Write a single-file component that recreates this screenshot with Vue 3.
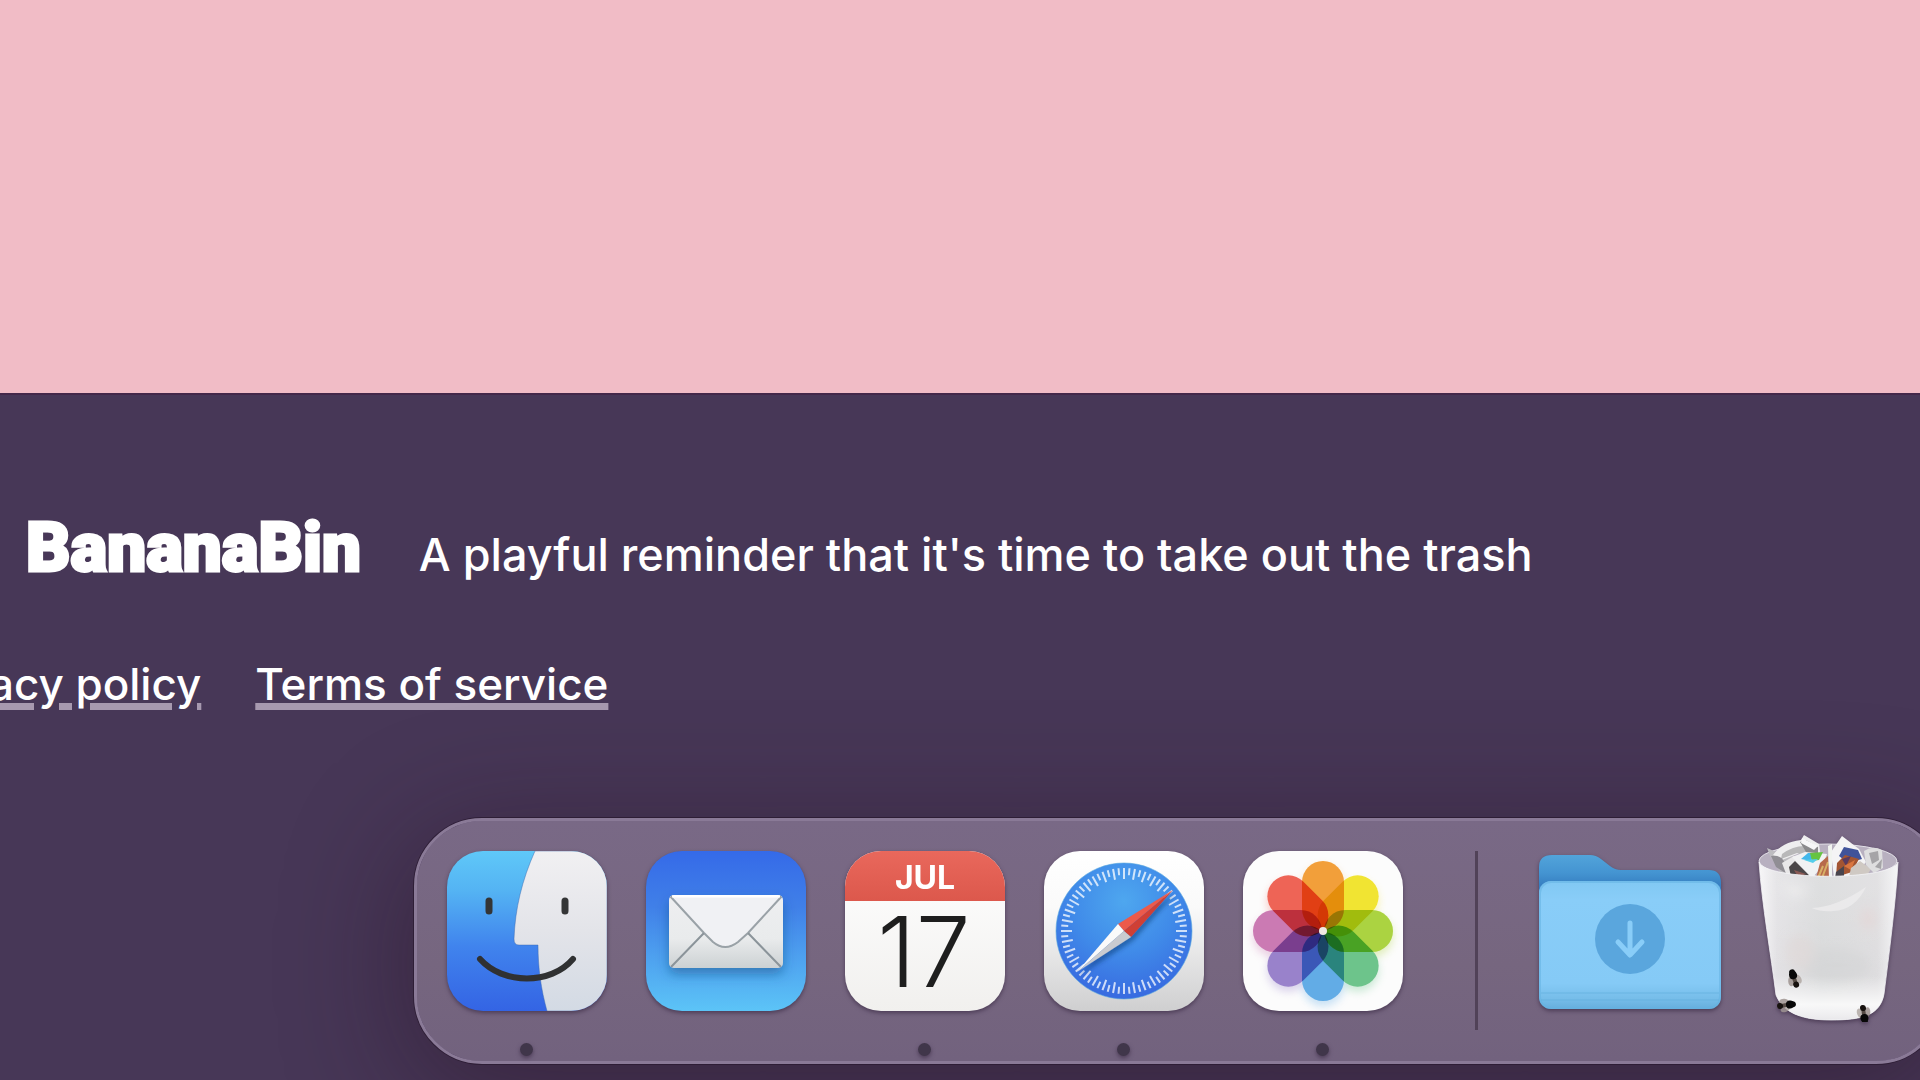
<script setup>
const petals = [
  { angle: 0, color: '#f29f3a' },
  { angle: 45, color: '#f1e432' },
  { angle: 90, color: '#abd341' },
  { angle: 135, color: '#6dc48b' },
  { angle: 180, color: '#62ace6' },
  { angle: 225, color: '#9982cb' },
  { angle: 270, color: '#cb7ab3' },
  { angle: 315, color: '#ee6456' },
]
const ticks = Array.from({ length: 72 }, (_, i) => ({ angle: i * 5, inner: i % 2 ? 24 : 28 }))
const flies = [
  'translate(36 143) rotate(-18)',
  'translate(29 170) rotate(82)',
  'translate(106 180) rotate(172)',
]
</script>

<template>
  <div class="page">
    <main class="hero"></main>

    <footer class="footer">
      <div class="intro">
        <strong class="brand">BananaBin</strong>
        <p class="tagline">A playful reminder that it's time to take out the trash</p>
      </div>
      <nav class="links" aria-label="Legal">
        <a href="#privacy">Privacy policy</a>
        <a href="#terms">Terms of service</a>
      </nav>
    </footer>

    <div class="dock" role="toolbar" aria-label="Dock">
      <button class="app running" type="button" aria-label="Finder">
        <svg viewBox="0 0 160 160" width="160" height="160">
          <defs>
            <linearGradient id="finderBlue" x2="0" y2="1"><stop stop-color="#5fc8f8" /><stop offset=".25" stop-color="#54b3f3" /><stop offset=".6" stop-color="#4083ed" /><stop offset="1" stop-color="#3464e4" /></linearGradient>
            <linearGradient id="finderWhite" x2="0" y2="1"><stop stop-color="#f1f0f2" /><stop offset=".5" stop-color="#e3e4e9" /><stop offset="1" stop-color="#d3dae4" /></linearGradient>
            <clipPath id="tile"><rect width="160" height="160" rx="36" /></clipPath>
          </defs>
          <g clip-path="url(#tile)">
            <rect width="160" height="160" fill="url(#finderBlue)" />
            <path d="M88 0C75 29 68 58 67 88Q67 94 72 94H91C91 117 94 138 100 160H160V0Z" fill="url(#finderWhite)" stroke="#3c68ad" stroke-opacity=".45" />
            <path d="M42 50V60M118 50V60" stroke="#343536" stroke-width="7" stroke-linecap="round" />
            <path d="M33 108C56 134 104 134 126 108" fill="none" stroke="#303132" stroke-width="6" stroke-linecap="round" />
          </g>
        </svg>
      </button>

      <button class="app" type="button" aria-label="Mail">
        <svg viewBox="0 0 160 160" width="160" height="160">
          <defs>
            <linearGradient id="mailBlue" x2="0" y2="1"><stop stop-color="#356ae8" /><stop offset=".35" stop-color="#4080e8" /><stop offset="1" stop-color="#5cc4f7" /></linearGradient>
            <linearGradient id="envelope" x2="0" y2="1"><stop stop-color="#eeeff1" /><stop offset=".6" stop-color="#e9ebec" /><stop offset="1" stop-color="#ccd1d3" /></linearGradient>
            <filter id="mailShadow" x="-20%" y="-20%" width="140%" height="160%"><feDropShadow dx="0" dy="6" stdDeviation="6" flood-color="#164a80" flood-opacity=".5" /></filter>
            <clipPath id="envelopeClip"><rect x="23" y="44" width="114" height="73" rx="5" /></clipPath>
          </defs>
          <rect width="160" height="160" rx="36" fill="url(#mailBlue)" />
          <rect x="23" y="44" width="114" height="73" rx="5" fill="url(#envelope)" filter="url(#mailShadow)" />
          <g clip-path="url(#envelopeClip)" fill="none" stroke="#8b949a" stroke-width="2">
            <path d="M58 82 25 116M102 82 135 116" />
            <path d="M24 45 58 82 67 91Q79 101 92 91L102 82 136 45Z" fill="#f0f1f4" stroke-opacity=".85" />
            <path d="M26 45H134" stroke="#fff" stroke-width="3" />
          </g>
        </svg>
      </button>

      <button class="app running" type="button" aria-label="Calendar">
        <svg viewBox="0 0 160 160" width="160" height="160">
          <defs>
            <linearGradient id="calendarRed" x2="0" y2="1"><stop stop-color="#e9685c" /><stop offset="1" stop-color="#dc584c" /></linearGradient>
            <linearGradient id="calendarPage" x2="0" y2="1"><stop stop-color="#fff" /><stop offset="1" stop-color="#f1f0ee" /></linearGradient>
          </defs>
          <g clip-path="url(#tile)">
            <rect width="160" height="160" fill="url(#calendarPage)" />
            <rect width="160" height="50" fill="url(#calendarRed)" />
          </g>
          <text class="month" x="80" y="38">JUL</text>
          <text class="day" x="79" y="136">17</text>
        </svg>
      </button>

      <button class="app running" type="button" aria-label="Safari">
        <svg viewBox="0 0 160 160" width="160" height="160">
          <defs>
            <linearGradient id="safariTile" x2="0" y2="1"><stop stop-color="#fff" /><stop offset=".35" stop-color="#fafafa" /><stop offset="1" stop-color="#cfcfd0" /></linearGradient>
            <radialGradient id="safariBlue" cx=".5" cy=".28" r=".75"><stop stop-color="#4ea7ef" /><stop offset=".5" stop-color="#408be9" /><stop offset="1" stop-color="#3767df" /></radialGradient>
            <filter id="needleShadow"><feDropShadow dx="2" dy="4" stdDeviation="2" flood-color="#0b2a66" flood-opacity=".45" /></filter>
          </defs>
          <rect width="160" height="160" rx="36" fill="url(#safariTile)" />
          <circle cx="80" cy="80" r="68" fill="url(#safariBlue)" stroke="#58a9de" stroke-opacity=".6" />
          <line v-for="t in ticks" :key="t.angle" x1="80" x2="80" y1="17" :y2="t.inner" :transform="`rotate(${t.angle} 80 80)`" stroke="#fff" stroke-opacity=".75" stroke-width="2" />
          <g filter="url(#needleShadow)">
            <path d="M129 39 74 73 80 80Z" fill="#ec5a4c" />
            <path d="M129 39 80 80 87 86Z" fill="#cf3f34" />
            <path d="M33 121 74 73 80 80Z" fill="#fafafa" />
            <path d="M33 121 80 80 87 86Z" fill="#c9cbd0" />
          </g>
        </svg>
      </button>

      <button class="app running" type="button" aria-label="Photos">
        <svg viewBox="0 0 160 160" width="160" height="160">
          <defs><filter id="petalBlur" x="-20%" y="-20%" width="140%" height="140%"><feGaussianBlur stdDeviation="4" /></filter></defs>
          <rect width="160" height="160" rx="36" fill="#fcfcfc" />
          <g filter="url(#petalBlur)" opacity=".35" transform="translate(0 5)">
            <rect v-for="p in petals" :key="p.angle" x="59" y="10" width="42" height="70" rx="21" :fill="p.color" :transform="`rotate(${p.angle} 80 80)`" />
          </g>
          <g class="petals">
            <rect v-for="p in petals" :key="p.angle" x="59" y="10" width="42" height="69" rx="21" :fill="p.color" :transform="`rotate(${p.angle} 80 80)`" />
          </g>
          <circle cx="80" cy="80" r="4" fill="#f0e9e2" />
        </svg>
      </button>

      <div class="divider" role="separator"></div>

      <button class="app folder" type="button" aria-label="Downloads">
        <svg viewBox="0 0 182 155" width="182" height="155">
          <defs>
            <linearGradient id="folderBack" x2="0" y2="1"><stop stop-color="#52a4da" /><stop offset=".3" stop-color="#4494d1" /><stop offset=".5" stop-color="#3780c2" /></linearGradient>
            <linearGradient id="folderFront" x2="0" y2="1"><stop stop-color="#81c8f3" /><stop offset=".15" stop-color="#89cdf8" /><stop offset=".8" stop-color="#85caf6" /><stop offset=".92" stop-color="#76bde9" /><stop offset="1" stop-color="#66aedc" /></linearGradient>
          </defs>
          <path d="M0 40V12Q0 0 13 0H51Q57 0 62 4L71 11Q76 15 82 15H170Q182 15 182 28V60H0Z" fill="url(#folderBack)" />
          <rect y="26" width="182" height="128" rx="12" fill="url(#folderFront)" />
          <rect x="1" y="27" width="180" height="126" rx="11" fill="none" stroke="#64b3e2" stroke-opacity=".55" stroke-width="2" />
          <path d="M2 138H180M2 145H180" stroke="#62aedc" stroke-opacity=".35" stroke-width="2" />
          <circle cx="91" cy="84" r="35" fill="#5aa6dd" />
          <path d="M91 68V99M79 87 91 100 103 87" fill="none" stroke="#89cdf8" stroke-width="5" stroke-linecap="round" stroke-linejoin="round" />
        </svg>
      </button>

      <button class="app trash" type="button" aria-label="Trash">
        <svg viewBox="0 0 141 187" width="141" height="187">
          <defs>
            <linearGradient id="binSide"><stop stop-color="#f6f5f7" /><stop offset=".13" stop-color="#e2e1e4" /><stop offset=".45" stop-color="#d9dadb" /><stop offset=".85" stop-color="#dedddf" /><stop offset="1" stop-color="#f4f4f6" /></linearGradient>
            <linearGradient id="binGlow" x2="0" y2="1"><stop stop-color="#fff" stop-opacity=".15" /><stop offset=".72" stop-color="#fff" stop-opacity="0" /><stop offset=".9" stop-color="#fff" stop-opacity=".8" /><stop offset="1" stop-color="#e9e8eb" /></linearGradient>
            <filter id="soft" x="-50%" y="-50%" width="200%" height="200%"><feGaussianBlur stdDeviation="6" /></filter>
            <filter id="paperSoft"><feGaussianBlur stdDeviation="0.6" /></filter>
          </defs>
          <ellipse cx="70" cy="26" rx="69" ry="17" fill="#b8b0c0" stroke="#e3e0e8" />
          <g stroke-linejoin="round" filter="url(#paperSoft)">
            <path d="M9 13 12 21 24 40 40 43 38 22 25 20Z" fill="#bdbcc0" />
            <path d="M15 20Q24 7 43 5L46 0 61 9 63 23 42 18 24 25Z" fill="#eeeeef" />
            <path d="M24 19Q36 10 49 11L59 17 56 24 39 18 23 24Z" fill="#b8b8b9" />
            <path d="M42 7 48 5 60 12 60 22 48 17Z" fill="#8a8a8c" />
            <path d="M44 3 60 11 56 15 43 8Z" fill="#f7f7f8" />
            <path d="M13 21Q28 18 29 39L18 32Z" fill="#908e94" />
            <path d="M24 28 36 21 60 43 30 44Z" fill="#e9e8e9" />
            <path d="M31 32 37 26 51 40 49 44 33 42Z" fill="#4b4648" />
            <path d="M36 35 48 39 40 42Z" fill="#8b5a54" />
            <path d="M34 22 47 17 69 19 64 32 54 43Z" fill="#f1f2f3" />
            <path d="M43 24 50 18 57 18 53 26Z" fill="#43b8eb" />
            <path d="M52 18 65 17 61 25 54 26Z" fill="#66c443" />
            <path d="M46 25 60 24 55 28Z" fill="#54cdea" />
            <path d="M62 28 70 21 72 42 58 43Z" fill="#b76a4c" />
            <path d="M64 43 70 27M60 43 65 31" stroke="#d8b066" stroke-width="2" />
            <path d="M73 17 84 1 101 14 108 27 97 40 76 43Z" fill="#f4f4f5" />
            <path d="M81 21 86 12 100 15 104 24 90 28Z" fill="#40539a" />
            <path d="M79 28 87 20 101 24 94 37 78 42Z" fill="#a35531" />
            <path d="M84 24 93 21 88 31Z" fill="#593a61" />
            <path d="M86 31 97 25 93 35Z" fill="#d9763f" />
            <path d="M78 37 86 31 86 41 77 43Z" fill="#4a454e" />
            <path d="M93 33 102 26 113 34 108 42 91 42Z" fill="#cfc9c3" />
            <path d="M106 16Q115 10 124 15L125 33 116 38 108 30Z" fill="#dededf" />
            <path d="M111 18 120 16 121 25 114 29ZM117 32 124 24 123 34Z" fill="#a5a4a7" />
            <path d="M70 11 74 9 74 44 71 44Z" fill="#f1f4f0" />
          </g>
          <path d="M1 27C8 46 133 46 140 27C138 65 131 120 126 159C122 181 103 185 73 185C42 185 25 177 18 160C13 120 4 70 1 27Z" fill="url(#binSide)" />
          <path d="M1 27C8 46 133 46 140 27C138 65 131 120 126 159C122 181 103 185 73 185C42 185 25 177 18 160C13 120 4 70 1 27Z" fill="url(#binGlow)" stroke="#f6f5f8" stroke-opacity=".75" />
          <g filter="url(#soft)" opacity=".5">
            <path d="M19 48 52 52 38 66Z" fill="#f5f4f4" />
            <ellipse cx="79" cy="130" rx="34" ry="16" fill="#d2d3d4" />
            <ellipse cx="42" cy="117" rx="14" ry="18" fill="#e0d6d4" />
            <ellipse cx="110" cy="84" rx="8" ry="11" fill="#e6d2d0" />
          </g>
          <path d="M54 73Q79 72 108 52Q97 75 75 76Q63 77 54 73Z" fill="#f0eff0" opacity=".7" filter="url(#paperSoft)" />
          <g v-for="f in flies" :key="f" :transform="f">
            <ellipse cx="-3" cy="3" rx="3" ry="5" fill="#938783" opacity=".75" transform="rotate(14)" />
            <ellipse cx="3" cy="3" rx="3" ry="5" fill="#aaa09b" opacity=".75" transform="rotate(-14)" />
            <ellipse cy="2" rx="2" ry="6" fill="#554b45" />
            <ellipse cy="-3" rx="4" ry="4" fill="#080808" />
            <circle cy="-6" r="3" fill="#080808" />
            <circle cy="7" r="3" fill="#17120f" />
          </g>
        </svg>
      </button>
    </div>
  </div>
</template>

<style>
body {
  margin: 0;
}
</style>

<style scoped>
.page {
  position: relative;
  display: flex;
  flex-direction: column;
  min-height: 100vh;
  overflow: hidden;
  background: #473757;
  font-family: Inter, "Liberation Sans", sans-serif;
}
.hero {
  min-height: 393px;
  background: #f1bcc6;
}
.footer {
  flex: 1;
  padding: 109px 26px 0;
  border-top: 2px solid #44284a;
  color: #fff;
}
.intro {
  display: flex;
  align-items: baseline;
  gap: 58px;
  white-space: nowrap;
}
.brand {
  font: 900 69px/88px Roboto, sans-serif;
  -webkit-text-stroke: 3px #fff;
}
.tagline {
  margin: 0;
  font-size: 45px;
  font-weight: 500;
  line-height: 56px;
}
.links {
  display: flex;
  gap: 54px;
  margin: 64px 0 0 -119px;
  white-space: nowrap;
}
.links a {
  color: #fff;
  font-size: 44px;
  font-weight: 500;
  line-height: 56px;
  text-decoration: underline;
  text-decoration-color: #a799af;
  text-decoration-thickness: 7px;
  text-underline-offset: 3px;
}
.dock {
  position: absolute;
  bottom: 16px;
  left: 414px;
  display: flex;
  align-items: flex-start;
  gap: 39px;
  width: max-content;
  padding: 30px 42px 31px 30px;
  border: 3px solid #8a7a97;
  border-radius: 68px;
  background: linear-gradient(#796986, #76667f 60%, #72627e) padding-box;
  background-color: #776784;
  box-shadow: 0 0 0 1px #2e1e36, 0 24px 120px 10px rgba(35, 15, 30, 0.42);
}
.app {
  position: relative;
  display: block;
  padding: 0;
  border: 0;
  background: none;
  filter: drop-shadow(0 2px 2px rgba(35, 20, 45, 0.5));
}
.app svg {
  display: block;
}
.running::after {
  position: absolute;
  top: 192px;
  left: 50%;
  width: 13px;
  height: 13px;
  margin-left: -7px;
  border-radius: 50%;
  background: #40364a;
  content: "";
}
.month,
.day {
  font-family: Inter, sans-serif;
  text-anchor: middle;
}
.month {
  fill: #fff;
  font-size: 32px;
  font-weight: 700;
}
.day {
  fill: #1e1e1e;
  font-size: 98px;
  font-weight: 300;
}
.petals {
  isolation: isolate;
}
.petals rect {
  mix-blend-mode: multiply;
}
.divider {
  width: 3px;
  height: 179px;
  margin: 0 22px 0 33px;
  background: #514258;
}
.folder {
  margin-top: 4px;
}
.trash {
  margin: -16px 0 0 -2px;
}
</style>
